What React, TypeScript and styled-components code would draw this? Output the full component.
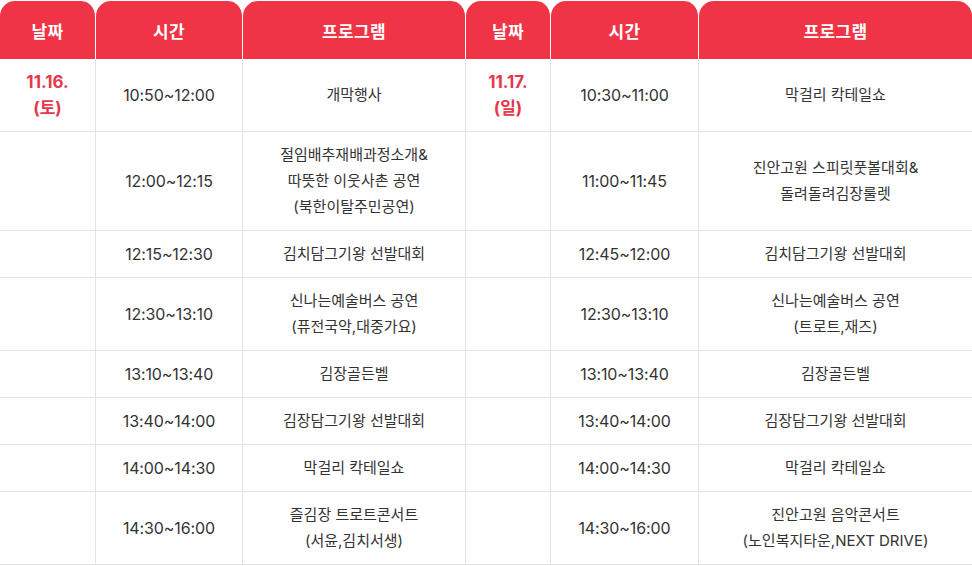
import styled, { createGlobalStyle } from "styled-components";

const GlobalStyle = createGlobalStyle`
  body {
    margin: 0;
    background: #fff;
    font-family: Inter, "Noto Sans CJK KR", sans-serif;
  }
`;

const Wrap = styled.div`
  padding-top: 1px;
  width: 972px;
`;

const Table = styled.table`
  width: 972px;
  table-layout: fixed;
  border-collapse: separate;
  border-spacing: 0;
`;

const Th = styled.th`
  height: 58px;
  padding: 0;
  background: #ef3445;
  color: #fff;
  font-size: 17px;
  font-weight: 700;
  letter-spacing: 0.3px;
  border-top-left-radius: 15px;
  border-top-right-radius: 15px;
  border-right: 1px solid #fff;

  &:last-child {
    border-right: 0;
  }
`;

const Td = styled.td`
  padding: 10px 4px;
  text-align: center;
  vertical-align: middle;
  font-size: 15px;
  line-height: 26px;
  color: #333;
  border-right: 1px solid #e3e3e3;
  border-bottom: 1px solid #e3e3e3;

  &:last-child {
    border-right: 0;
  }
`;

const TimeCell = styled(Td)`
  font-size: 16px;
  letter-spacing: -0.1px;
`;

const DateCell = styled(Td)`
  color: #e8364a;
  font-size: 17px;
  font-weight: 700;
`;

type Item = { time: string; program: string[] };

const sat: Item[] = [
  { time: "10:50~12:00", program: ["개막행사"] },
  { time: "12:00~12:15", program: ["절임배추재배과정소개&", "따뜻한 이웃사촌 공연", "(북한이탈주민공연)"] },
  { time: "12:15~12:30", program: ["김치담그기왕 선발대회"] },
  { time: "12:30~13:10", program: ["신나는예술버스 공연", "(퓨전국악,대중가요)"] },
  { time: "13:10~13:40", program: ["김장골든벨"] },
  { time: "13:40~14:00", program: ["김장담그기왕 선발대회"] },
  { time: "14:00~14:30", program: ["막걸리 칵테일쇼"] },
  { time: "14:30~16:00", program: ["즐김장 트로트콘서트", "(서윤,김치서생)"] },
];

const sun: Item[] = [
  { time: "10:30~11:00", program: ["막걸리 칵테일쇼"] },
  { time: "11:00~11:45", program: ["진안고원 스피릿풋볼대회&", "돌려돌려김장룰렛"] },
  { time: "12:45~12:00", program: ["김치담그기왕 선발대회"] },
  { time: "12:30~13:10", program: ["신나는예술버스 공연", "(트로트,재즈)"] },
  { time: "13:10~13:40", program: ["김장골든벨"] },
  { time: "13:40~14:00", program: ["김장담그기왕 선발대회"] },
  { time: "14:00~14:30", program: ["막걸리 칵테일쇼"] },
  { time: "14:30~16:00", program: ["진안고원 음악콘서트", "(노인복지타운,NEXT DRIVE)"] },
];

function Lines({ lines }: { lines: string[] }) {
  return (
    <>
      {lines.map((l, i) => (
        <div key={i}>{l}</div>
      ))}
    </>
  );
}

export default function App() {
  return (
    <Wrap>
      <GlobalStyle />
      <Table>
        <colgroup>
          <col style={{ width: 96 }} />
          <col style={{ width: 147 }} />
          <col style={{ width: 223 }} />
          <col style={{ width: 85 }} />
          <col style={{ width: 148 }} />
          <col style={{ width: 273 }} />
        </colgroup>
        <thead>
          <tr>
            <Th>날짜</Th>
            <Th>시간</Th>
            <Th>프로그램</Th>
            <Th>날짜</Th>
            <Th>시간</Th>
            <Th>프로그램</Th>
          </tr>
        </thead>
        <tbody>
          {sat.map((s, i) => (
            <tr key={i}>
              {i === 0 ? (
                <DateCell>
                  <Lines lines={["11.16.", "(토)"]} />
                </DateCell>
              ) : (
                <Td />
              )}
              <TimeCell>{s.time}</TimeCell>
              <Td>
                <Lines lines={s.program} />
              </Td>
              {i === 0 ? (
                <DateCell>
                  <Lines lines={["11.17.", "(일)"]} />
                </DateCell>
              ) : (
                <Td />
              )}
              <TimeCell>{sun[i].time}</TimeCell>
              <Td>
                <Lines lines={sun[i].program} />
              </Td>
            </tr>
          ))}
        </tbody>
      </Table>
    </Wrap>
  );
}
